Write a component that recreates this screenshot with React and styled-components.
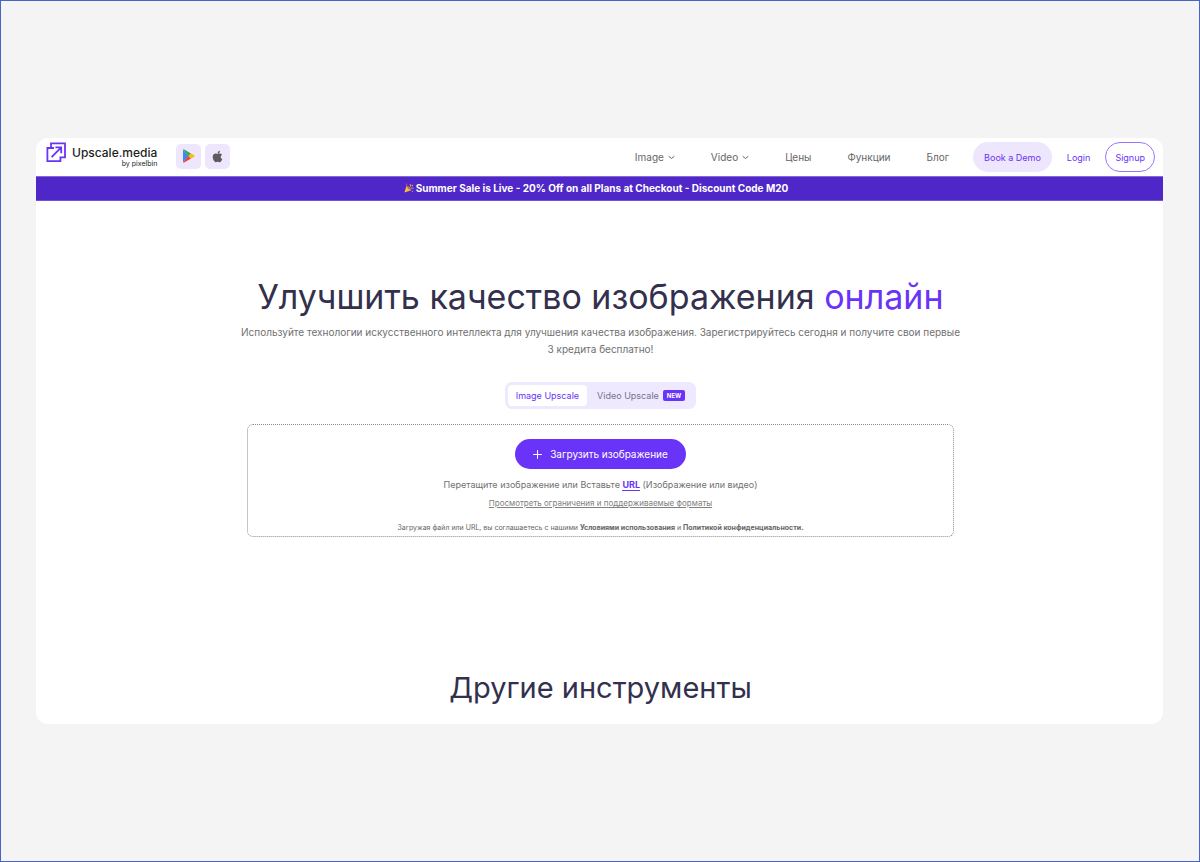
import React, { useState } from 'react'
import styled, { createGlobalStyle } from 'styled-components';

const GlobalStyle = createGlobalStyle`
    * {
        box-sizing: border-box;
    }
    body {
        margin: 0;
        font-family: Inter, "Liberation Sans", sans-serif;
        color: #666666;
        background-color: #f4f4f4;
    }
    button {
        font-family: inherit;
        cursor: pointer;
    }
    a {
        color: inherit;
        text-decoration: none;
    }
`
const Page = styled.div`
    min-height: 100vh;
    display: flex;
    flex-direction: column;
    justify-content: center;
    padding: 0 36px 0 35px;
    border: 1px solid #4a62c8;
`
const Window = styled.div`
    background-color: #ffffff;
    border-radius: 12px;
    overflow: hidden;
`
const Header = styled.header`
    display: flex;
    align-items: center;
    height: 38px;
    padding: 0 8px 0 10px;
`
const Brand = styled.a`
    display: flex;
    align-items: flex-start;
    gap: 6px;
    height: 30px;
    color: #1e1e1e;
`
const BrandText = styled.span`
    display: flex;
    flex-direction: column;
    align-items: flex-end;
    padding-top: 3px;
`
const BrandName = styled.span`
    font-size: 12px;
    font-weight: 500;
    line-height: 16px;
    span {
        color: #6933f8;
    }
`
const BrandBy = styled.span`
    font-size: 7px;
    line-height: 6px;
`
const Stores = styled.div`
    display: flex;
    gap: 4px;
    margin-left: 19px;
`
const StoreLink = styled.a`
    display: flex;
    align-items: center;
    justify-content: center;
    width: 25px;
    height: 25px;
    margin-bottom: 2px;
    border-radius: 5px;
    background-color: #eee6fc;
`
const Nav = styled.nav`
    display: flex;
    align-items: center;
    gap: 36px;
    margin-left: auto;
    font-size: 10px;
`
const NavButton = styled.button`
    display: flex;
    align-items: center;
    gap: 4px;
    padding: 0;
    border: 0;
    background: none;
    color: inherit;
    font-size: 10px;
`
const Account = styled.div`
    display: flex;
    align-items: center;
    gap: 15px;
    margin-left: 24px;
    font-size: 9px;
    color: #6933f8;
`
const Pill = styled.a`
    display: flex;
    align-items: center;
    height: 30px;
    padding: ${(props) => props.$outlined ? "0 9px" : "0 11px"};
    border: ${(props) => props.$outlined ? "1px solid #9a74fa" : "0"};
    border-radius: 15px;
    background-color: ${(props) => props.$outlined ? "#ffffff" : "#eee6fc"};
`
const Banner = styled.div`
    display: flex;
    align-items: center;
    justify-content: center;
    gap: 2px;
    height: 25px;
    padding: 0 7px 1px 0;
    border-top: 1px solid #8468d8;
    border-bottom: 1px solid #7352d4;
    background-color: #4f27c8;
    color: #ffffff;
    font-size: 10px;
    font-weight: 700;
`
const Main = styled.main`
    display: flex;
    flex-direction: column;
    align-items: center;
    padding: 74px 20px 17px 22px;
    text-align: center;
`
const Title = styled.h1`
    margin: 0;
    font-size: 34px;
    font-weight: 400;
    line-height: 44px;
    color: #33304d;
    span {
        color: #6933f8;
    }
`
const Lead = styled.p`
    max-width: 724px;
    margin: 5px 0 0;
    font-size: 10px;
    line-height: 17px;
    color: #707070;
`
const Tabs = styled.div`
    display: flex;
    gap: 2px;
    margin-top: 24px;
    padding: 3px;
    border-radius: 7px;
    background-color: #eee9ff;
`
const Tab = styled.button`
    display: flex;
    align-items: center;
    gap: 4px;
    height: 21px;
    padding: 0 8px;
    border: 0;
    border-radius: 4px;
    background-color: ${(props) => props.$active ? "#ffffff" : "transparent"};
    color: ${(props) => props.$active ? "#6933f8" : "#77738a"};
    font-size: 9px;
`
const NewBadge = styled.span`
    padding: 0 4px;
    border-radius: 2px;
    background-color: #6933f8;
    color: #ffffff;
    font-size: 6px;
    font-weight: 700;
    line-height: 11px;
`
const DropZone = styled.section`
    display: flex;
    flex-direction: column;
    align-items: center;
    width: 100%;
    max-width: 707px;
    margin-top: 15px;
    padding: 14px 16px 2px;
    border: 1px dotted #8c8c8c;
    border-radius: 6px;
`
const UploadButton = styled.button`
    display: flex;
    align-items: center;
    gap: 8px;
    height: 30px;
    padding: 0 18px;
    border: 0;
    border-radius: 15px;
    background-color: #6933f8;
    color: #ffffff;
    font-size: 10px;
`
const Hint = styled.p`
    margin: 9px 0 0;
    font-size: 9px;
    line-height: 14px;
    color: #707070;
`
const UrlButton = styled.button`
    padding: 0;
    border: 0;
    border-bottom: 1px solid #6933f8;
    background: none;
    color: #6933f8;
    font-size: 9px;
    font-weight: 700;
    line-height: 11px;
`
const FormatsLink = styled.a`
    margin-top: 6px;
    font-size: 8px;
    line-height: 10px;
    text-decoration: underline;
    color: #808080;
`
const Terms = styled.p`
    margin: 14px 0 0;
    font-size: 7px;
    line-height: 12px;
    a {
        font-weight: 700;
    }
`
const SectionTitle = styled.h2`
    margin: 132px 0 0;
    font-size: 29px;
    font-weight: 400;
    line-height: 38px;
    color: #33304d;
`

function LogoIcon() {
    return (
        <svg width="20" height="20" viewBox="0 0 20 20" fill="none" stroke="#6933f8" strokeWidth="1.8">
            <path d="M5 6V1.400H19V15.400H14.400V19.100H1.400V6H8" />
            <path d="M5.600 15.200 15 5.600M9.400 5.400h5.800v5.800" />
        </svg>
    )
}

function PlayIcon() {
    return (
        <svg width="13" height="14" viewBox="0 0 13 14">
            <path d="M1 .8v12.4L6.800 7z" fill="#4285f4" />
            <path d="M1 .8C1.400.3 2 .4 2.600.7L9 4.500 6.500 7z" fill="#34a853" />
            <path d="M1 13.200c.4.500 1 .4 1.600.1L9 9.500 6.500 7z" fill="#ea4335" />
            <path d="M9 4.500 12.200 6.300c.7.400.7 1 0 1.400L9 9.500 6.500 7z" fill="#fbbc04" />
        </svg>
    )
}

function AppleIcon() {
    return (
        <svg width="11" height="13" viewBox="0 0 384 512" fill="#5c5c5c">
            <path d="M318.700 268.700c-.2-36.700 16.400-64.400 50-84.800-18.800-26.900-47.200-41.700-84.700-44.600-35.500-2.800-74.300 20.700-88.500 20.700-15 0-49.400-19.700-76.400-19.700C63.300 141.200 4 184.800 4 273.500q0 39.300 14.400 81.200c12.800 36.700 59 126.700 107.200 125.200 25.200-.6 43-17.900 75.800-17.900 31.800 0 48.300 17.900 76.400 17.900 48.600-.7 90.400-82.500 102.600-119.300-65.200-30.700-61.700-90-61.700-91.900zm-56.600-164.200c27.300-32.400 24.800-61.900 24-72.500-24.100 1.400-52 16.400-67.900 34.900-17.500 19.800-27.800 44.300-25.600 71.900 26.100 2 49.900-11.400 69.500-34.300z" />
        </svg>
    )
}

function ChevronIcon() {
    return (
        <svg width="7" height="5" viewBox="0 0 7 5" fill="none" stroke="#666666" strokeLinecap="round">
            <path d="M1 1.500 3.500 3.500 6 1.500" />
        </svg>
    )
}

function PlusIcon() {
    return (
        <svg width="9" height="9" viewBox="0 0 9 9" stroke="#ffffff" strokeLinecap="round">
            <path d="M4.500.5v8M.5 4.500h8" />
        </svg>
    )
}

function PartyIcon() {
    return (
        <svg width="10" height="10" viewBox="0 0 10 10">
            <path d="M.4 9.600 2.600 2.600 7.400 7.200z" fill="#f7bd45" />
            <path d="M2.600 2.600C4.500 3 6.800 5.200 7.400 7.200c-2 .2-5-2.600-4.800-4.600z" fill="#b8733c" />
            <path d="M5.600 4.400C6.800 3.500 6.800 2.300 6 1M6.600 5.700c.9-.9 1.800-.9 2.900-.3" fill="none" stroke="#f5b942" strokeWidth=".9" />
            <circle cx="2.500" cy="1.200" r=".6" fill="#ea6b5a" />
            <circle cx="8.300" cy="2.600" r=".8" fill="#ef9a4a" />
            <circle cx="8.600" cy="8.400" r=".6" fill="#5fb6e8" />
        </svg>
    )
}

export default function App() {
    const [tab, setTab] = useState("image");

    return (
    <>
        <GlobalStyle/>
        <Page>
            <Window>
                <Header>
                    <Brand href="#">
                        <LogoIcon/>
                        <BrandText>
                            <BrandName>Upscale<span>.</span>media</BrandName>
                            <BrandBy>by pixelbin</BrandBy>
                        </BrandText>
                    </Brand>
                    <Stores>
                        <StoreLink href="#" aria-label="Google Play"><PlayIcon/></StoreLink>
                        <StoreLink href="#" aria-label="App Store"><AppleIcon/></StoreLink>
                    </Stores>
                    <Nav>
                        <NavButton>Image <ChevronIcon/></NavButton>
                        <NavButton>Video <ChevronIcon/></NavButton>
                        <a href="#">Цены</a>
                        <a href="#">Функции</a>
                        <a href="#">Блог</a>
                    </Nav>
                    <Account>
                        <Pill href="#">Book a Demo</Pill>
                        <a href="#">Login</a>
                        <Pill href="#" $outlined>Signup</Pill>
                    </Account>
                </Header>
                <Banner>
                    <PartyIcon/>
                    <span>Summer Sale is Live - 20% Off on all Plans at Checkout - Discount Code M20</span>
                </Banner>
                <Main>
                    <Title>Улучшить качество изображения <span>онлайн</span></Title>
                    <Lead>
                        Используйте технологии искусственного интеллекта для улучшения качества изображения. Зарегистрируйтесь сегодня и получите свои первые 3&nbsp;кредита бесплатно!
                    </Lead>
                    <Tabs role="tablist">
                        <Tab role="tab" aria-selected={tab === "image"} $active={tab === "image"} onClick={() => setTab("image")}>
                            Image Upscale
                        </Tab>
                        <Tab role="tab" aria-selected={tab === "video"} $active={tab === "video"} onClick={() => setTab("video")}>
                            Video Upscale <NewBadge>NEW</NewBadge>
                        </Tab>
                    </Tabs>
                    <DropZone>
                        <UploadButton><PlusIcon/>Загрузить изображение</UploadButton>
                        <Hint>Перетащите изображение или Вставьте <UrlButton>URL</UrlButton> (Изображение или видео)</Hint>
                        <FormatsLink href="#">Просмотреть ограничения и поддерживаемые форматы</FormatsLink>
                        <Terms>
                            Загружая файл или URL, вы соглашаетесь с нашими <a href="#">Условиями использования</a> и <a href="#">Политикой конфиденциальности.</a>
                        </Terms>
                    </DropZone>
                    <SectionTitle>Другие инструменты</SectionTitle>
                </Main>
            </Window>
        </Page>
    </>
    )
}
